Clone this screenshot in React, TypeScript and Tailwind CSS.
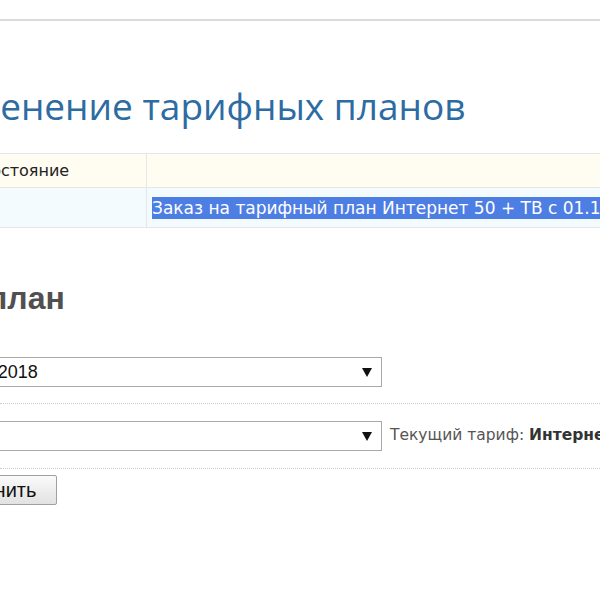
import React from 'react'

const tahoma = { fontFamily: '"DejaVu Sans", Verdana, sans-serif' }

const Arrow = () => (
  <svg width="10" height="9" viewBox="0 0 10 9" className="shrink-0">
    <path d="M0 0 L10 0 L5 9 Z" fill="#111" />
  </svg>
)

const FakeSelect = ({ value, className }: { value?: string; className?: string }) => (
  <div
    className={
      'flex h-[30px] items-center justify-between border border-[#a9a9a9] bg-white pl-[4px] pr-[9px] font-["Liberation_Sans",Arial,sans-serif] text-[18px] text-[#111] ' +
      (className ?? '')
    }
  >
    <span className="whitespace-nowrap">{value}</span>
    <Arrow />
  </div>
)

export default function App() {
  return (
    <div className="h-[600px] w-[600px] overflow-hidden bg-white">
      <div className="h-[19px]" />
      <div className="h-[2px] bg-[#dadada]" />

      <h1 className="mt-[66px] -ml-[73px] whitespace-nowrap font-['Open_Sans',sans-serif] text-[37px] leading-none text-[#2d6ba3]">
        Изменение тарифных планов
      </h1>

      <table
        className="mt-[29px] -ml-[27px] w-[800px] border-collapse text-[16px] text-[#222]"
        style={tahoma}
      >
        <tbody>
          <tr className="h-[34px] bg-[#fffcf1]">
            <td className="w-[173px] border border-[#e6e6e6] px-[6px]">Состояние</td>
            <td className="border border-[#e6e6e6] px-[6px]"></td>
          </tr>
          <tr className="h-[40px] bg-[#f4fbff]">
            <td className="border border-[#e6e6e6] px-[6px]"></td>
            <td className="whitespace-nowrap border border-[#e6e6e6] px-[5px] pt-[3px] text-[17px]">
              <span className="bg-[#4d7ee3] py-[1px] text-white">
                Заказ на тарифный план Интернет 50 + ТВ с 01.11.2018
              </span>
            </td>
          </tr>
        </tbody>
      </table>

      <h2 className="mt-[54px] -ml-[191px] whitespace-nowrap font-['Liberation_Sans',Arial,sans-serif] text-[32px] font-bold leading-none text-[#505050]">
        Тарифный план
      </h2>

      <FakeSelect value="01.11.2018" className="mt-[43px] -ml-[56px] w-[438px]" />

      <div className="mt-[16px] border-t border-dotted border-[#c9ccd0]" />

      <div className="mt-[17px] flex items-center gap-[8px]">
        <FakeSelect className="-ml-[56px] w-[438px] shrink-0" />
        <span className="whitespace-nowrap text-[15.5px] text-[#555]" style={tahoma}>
          Текущий тариф: <b className="text-[#333]">Интернет 50 + ТВ</b>
        </span>
      </div>

      <div className="mt-[17px] border-t border-dotted border-[#c9ccd0]" />

      <button className="mt-[6px] -ml-[78px] h-[30px] rounded-[2px] border border-[#a0a0a0] bg-gradient-to-b from-[#fafafa] to-[#e2e2e2] pl-[14px] pr-[20px] font-['Liberation_Sans',Arial,sans-serif] text-[20px] leading-none text-[#111]">
        Сохранить
      </button>
    </div>
  )
}
